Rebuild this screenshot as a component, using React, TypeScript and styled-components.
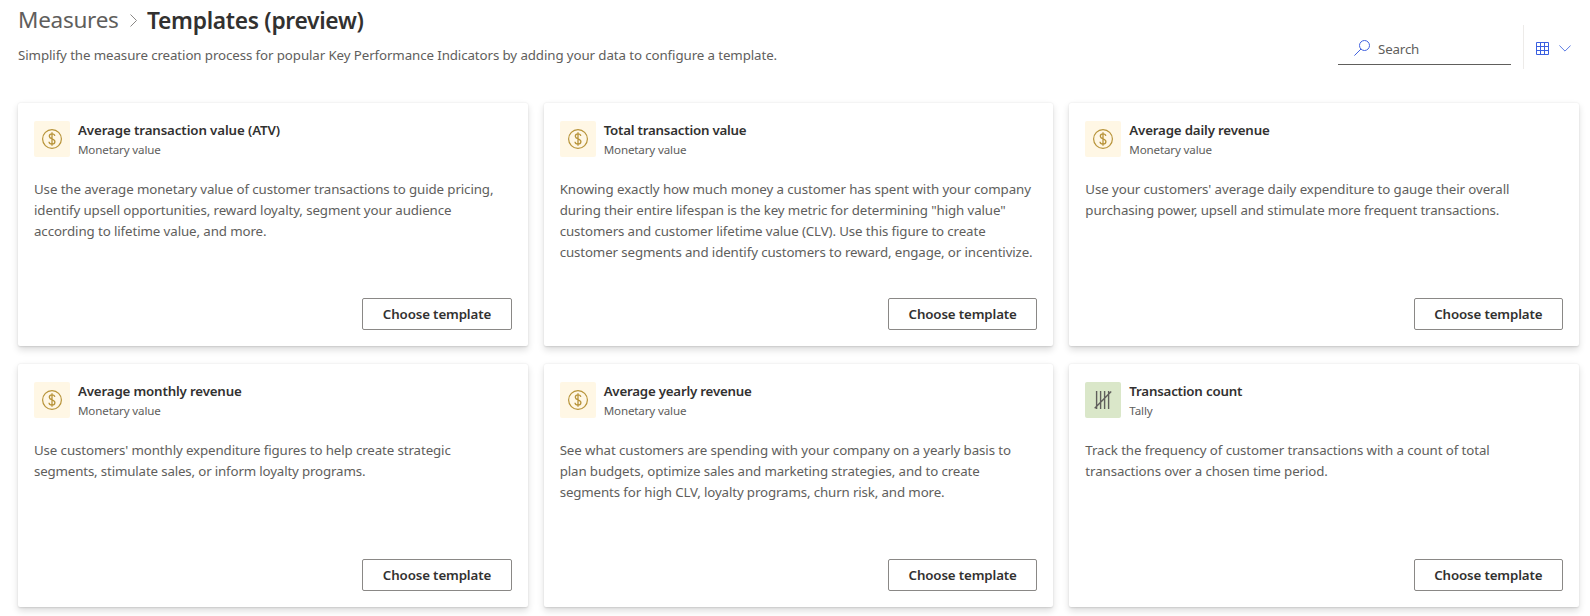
import React from 'react';
import styled, { createGlobalStyle } from 'styled-components';

const GlobalStyle = createGlobalStyle`
  * { box-sizing: border-box; }
  body {
    margin: 0;
    background: #fff;
    color: #605e5c;
    font-family: "Noto Sans", "Open Sans", sans-serif;
    font-size: 13.3px;
  }
`;

const Page = styled.main`
  width: 1590px;
  height: 616px;
  padding: 0 11px 0 18px;
  overflow: hidden;
`;

const Header = styled.header`
  display: flex;
  justify-content: space-between;
  height: 103px;
`;

const Intro = styled.div`
  display: flex;
  flex-direction: column;
`;

const Breadcrumb = styled.nav`
  display: flex;
  align-items: center;
  height: 40px;
  font-size: 22.5px;
  line-height: 32px;
  white-space: nowrap;
`;

const Parent = styled.span`
  width: 101px;
  letter-spacing: -0.26px;
`;

const Chevron = styled.svg`
  margin: 0 10px 0 11px;
`;

const Current = styled.h1`
  margin: 0;
  padding-top: 2px;
  color: #323130;
  font-size: 22.8px;
  font-weight: 600;
  letter-spacing: -0.31px;
`;

const Summary = styled.p`
  margin: 5px 0 0;
  line-height: 20px;
  letter-spacing: -0.095px;
  white-space: nowrap;
`;

const Tools = styled.div`
  display: flex;
  height: 44px;
  margin-top: 25px;
`;

const SearchBox = styled.label`
  display: flex;
  align-items: center;
  width: 173px;
  height: 40px;
  padding: 7px 0 0 16px;
  gap: 8px;
  border-bottom: 1px solid #605e5c;
`;

const SearchText = styled.span`
  padding-top: 2px;
  letter-spacing: -0.15px;
`;

const ViewSwitch = styled.div`
  display: flex;
  align-items: center;
  gap: 10px;
  width: 56px;
  margin-left: 12px;
  padding: 3px 0 0 12px;
  border-left: 1px solid #edebe9;
`;

const CardGrid = styled.section`
  display: grid;
  grid-template-columns: repeat(3, minmax(0, 1fr));
  grid-auto-rows: 243px;
  gap: 18px 16px;
`;

const Card = styled.article`
  display: flex;
  flex-direction: column;
  padding: 18px 16px 16px;
  border-radius: 2px;
  background: #fff;
  box-shadow: 0 3.2px 7.2px 0 rgba(0, 0, 0, 0.132), 0 0.6px 1.8px 0 rgba(0, 0, 0, 0.108);
`;

const CardHead = styled.div`
  display: flex;
  gap: 8px;
  height: 36px;
`;

const Tile = styled.div<{ $kind: Kind }>`
  display: flex;
  align-items: center;
  justify-content: center;
  width: 36px;
  height: 36px;
  border-radius: 2px;
  background: ${(p) => (p.$kind === 'tally' ? '#dae7c9' : '#fff7e5')};
`;

const Title = styled.h2<{ $track: number }>`
  margin: -1px 0 0;
  color: #323130;
  font-size: 13.3px;
  font-weight: 600;
  line-height: 20px;
  letter-spacing: ${(p) => p.$track}px;
`;

const Category = styled.div`
  font-size: 11.6px;
  line-height: 16px;
  margin-top: 2px;
  letter-spacing: -0.15px;
`;

const Body = styled.p`
  margin: 22px 0 0;
  line-height: 21px;
  white-space: nowrap;
`;

const Line = styled.span<{ $track: number }>`
  display: block;
  letter-spacing: ${(p) => p.$track}px;
`;

const ChooseButton = styled.button`
  align-self: flex-end;
  width: 149.4px;
  height: 32px;
  margin-top: auto;
  padding: 0;
  border: 1px solid #8a8886;
  border-radius: 2px;
  background: #fff;
  color: #323130;
  font: 600 13.3px/20px "Noto Sans", "Open Sans", sans-serif;
  letter-spacing: -0.13px;
`;

type Kind = 'money' | 'tally';

interface Template {
  title: string;
  track: number;
  kind: Kind;
  lines: [string, number][];
}

const templates: Template[] = [
  {
    title: 'Average transaction value (ATV)',
    track: -0.11,
    kind: 'money',
    lines: [
      ['Use the average monetary value of customer transactions to guide pricing,', -0.1],
      ['identify upsell opportunities, reward loyalty, segment your audience', -0.1],
      ['according to lifetime value, and more.', -0.1],
    ],
  },
  {
    title: 'Total transaction value',
    track: -0.22,
    kind: 'money',
    lines: [
      ['Knowing exactly how much money a customer has spent with your company', -0.08],
      ['during their entire lifespan is the key metric for determining "high value"', -0.11],
      ['customers and customer lifetime value (CLV). Use this figure to create', -0.11],
      ['customer segments and identify customers to reward, engage, or incentivize.', -0.12],
    ],
  },
  {
    title: 'Average daily revenue',
    track: -0.18,
    kind: 'money',
    lines: [
      ["Use your customers' average daily expenditure to gauge their overall", -0.09],
      ['purchasing power, upsell and stimulate more frequent transactions.', -0.125],
    ],
  },
  {
    title: 'Average monthly revenue',
    track: -0.17,
    kind: 'money',
    lines: [
      ["Use customers' monthly expenditure figures to help create strategic", -0.108],
      ['segments, stimulate sales, or inform loyalty programs.', -0.155],
    ],
  },
  {
    title: 'Average yearly revenue',
    track: -0.22,
    kind: 'money',
    lines: [
      ['See what customers are spending with your company on a yearly basis to', -0.089],
      ['plan budgets, optimize sales and marketing strategies, and to create', -0.116],
      ['segments for high CLV, loyalty programs, churn risk, and more.', -0.13],
    ],
  },
  {
    title: 'Transaction count',
    track: -0.2,
    kind: 'tally',
    lines: [
      ['Track the frequency of customer transactions with a count of total', -0.092],
      ['transactions over a chosen time period.', -0.1],
    ],
  },
];

const MoneyIcon = () => (
  <svg width="20" height="20" viewBox="0 0 20 20" fill="none" stroke="#b8943a">
    <circle cx="10" cy="10" r="9.4" strokeWidth="1.2" />
    <path d="M10 3.2v13.6M12.8 6.8C12.6 5.5 11.6 4.8 10 4.8S7.3 5.7 7.3 7.2c0 3.4 5.6 1.9 5.6 5.4 0 1.6-1.2 2.6-2.9 2.6s-2.9-.9-3-2.4" strokeWidth="1.3" />
  </svg>
);

const TallyIcon = () => (
  <svg width="18" height="20" viewBox="0 0 18 20" fill="none" stroke="#605e5c" strokeWidth="1.4">
    <path d="M2.6 1v18M6.6 1v18M10.6 1v18M14.6 1v18M.7 18.2 17.2 1.4" />
  </svg>
);

const App = () => (
  <>
    <GlobalStyle />
    <Page>
      <Header>
        <Intro>
          <Breadcrumb>
            <Parent>Measures</Parent>
            <Chevron width="7" height="13" viewBox="0 0 7 13" fill="none" stroke="#8a8886">
              <path d="M.5.5l6 6-6 6" />
            </Chevron>
            <Current>Templates (preview)</Current>
          </Breadcrumb>
          <Summary>
            Simplify the measure creation process for popular Key Performance Indicators by adding your data to configure a template.
          </Summary>
        </Intro>
        <Tools>
          <SearchBox>
            <svg width="16" height="16" viewBox="0 0 16 16" fill="none" stroke="#4262df">
              <circle cx="10.5" cy="5.5" r="5" />
              <path d="M7 9L.4 15.6" />
            </svg>
            <SearchText>Search</SearchText>
          </SearchBox>
          <ViewSwitch>
            <svg width="13" height="13" viewBox="0 0 13 13" fill="none" stroke="#3a5fe0">
              <path d="M.5.5h12v12H.5zM.5 4.5h12M.5 8.5h12M4.5.5v12M8.5.5v12" />
            </svg>
            <svg width="12" height="7" viewBox="0 0 12 7" fill="none" stroke="#5b7be4">
              <path d="M.4.5L6 6.1 11.6.5" />
            </svg>
          </ViewSwitch>
        </Tools>
      </Header>
      <CardGrid>
        {templates.map((t) => (
          <Card key={t.title}>
            <CardHead>
              <Tile $kind={t.kind}>{t.kind === 'tally' ? <TallyIcon /> : <MoneyIcon />}</Tile>
              <div>
                <Title $track={t.track}>{t.title}</Title>
                <Category>{t.kind === 'tally' ? 'Tally' : 'Monetary value'}</Category>
              </div>
            </CardHead>
            <Body>
              {t.lines.map(([text, track]) => (
                <Line key={text} $track={track}>
                  {text}
                </Line>
              ))}
            </Body>
            <ChooseButton>Choose template</ChooseButton>
          </Card>
        ))}
      </CardGrid>
    </Page>
  </>
);

export default App;
